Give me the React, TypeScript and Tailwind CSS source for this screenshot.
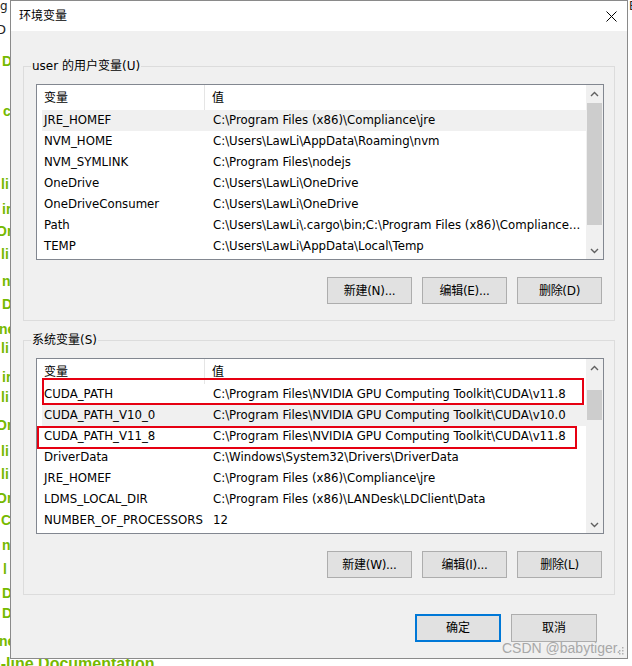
import React from "react";

type Row = { name: string; value: string; selected?: boolean };

const userRows: Row[] = [
  { name: "JRE_HOMEF", value: "C:\\Program Files (x86)\\Compliance\\jre", selected: true },
  { name: "NVM_HOME", value: "C:\\Users\\LawLi\\AppData\\Roaming\\nvm" },
  { name: "NVM_SYMLINK", value: "C:\\Program Files\\nodejs" },
  { name: "OneDrive", value: "C:\\Users\\LawLi\\OneDrive" },
  { name: "OneDriveConsumer", value: "C:\\Users\\LawLi\\OneDrive" },
  { name: "Path", value: "C:\\Users\\LawLi\\.cargo\\bin;C:\\Program Files (x86)\\Compliance..." },
  { name: "TEMP", value: "C:\\Users\\LawLi\\AppData\\Local\\Temp" },
];

const sysRows: Row[] = [
  { name: "CUDA_PATH", value: "C:\\Program Files\\NVIDIA GPU Computing Toolkit\\CUDA\\v11.8" },
  { name: "CUDA_PATH_V10_0", value: "C:\\Program Files\\NVIDIA GPU Computing Toolkit\\CUDA\\v10.0", selected: true },
  { name: "CUDA_PATH_V11_8", value: "C:\\Program Files\\NVIDIA GPU Computing Toolkit\\CUDA\\v11.8" },
  { name: "DriverData", value: "C:\\Windows\\System32\\Drivers\\DriverData" },
  { name: "JRE_HOMEF", value: "C:\\Program Files (x86)\\Compliance\\jre" },
  { name: "LDMS_LOCAL_DIR", value: "C:\\Program Files (x86)\\LANDesk\\LDClient\\Data" },
  { name: "NUMBER_OF_PROCESSORS", value: "12" },
];

function Chevron({ up }: { up?: boolean }) {
  return (
    <svg width="9" height="6" viewBox="0 0 9 6">
      {up ? (
        <path d="M1 5 L4.5 1.5 L8 5" fill="none" stroke="#606060" strokeWidth="1.4" />
      ) : (
        <path d="M1 1 L4.5 4.5 L8 1" fill="none" stroke="#606060" strokeWidth="1.4" />
      )}
    </svg>
  );
}

function ListView({
  rows,
  thumbTop,
  thumbHeight,
  children,
}: {
  rows: Row[];
  thumbTop: string;
  thumbHeight: string;
  children?: React.ReactNode;
}) {
  return (
    <div className="relative h-[176px] border border-[#828790] bg-white flex">
      <div className="flex-1 flex flex-col">
        <div className="h-[25px] flex items-center shrink-0 text-[12px]">
          <div className="w-[168px] pl-[7px] h-full flex items-center border-r border-[#e5e5e5]">变量</div>
          <div className="pl-[7px]">值</div>
        </div>
        {rows.map((r, i) => (
          <div
            key={i}
            className={
              "ml-[5px] h-[21px] leading-[21px] flex whitespace-nowrap " +
              (r.selected ? "bg-[#f0f0f0]" : "")
            }
          >
            <div className="w-[169px] pl-[2px]">{r.name}</div>
            <div className="pl-[2px]">{r.value}</div>
          </div>
        ))}
      </div>
      <div className="w-[17px] bg-[#f0f0f0] flex flex-col">
        <div className="h-[17px] flex items-center justify-center">
          <Chevron up />
        </div>
        <div className={"mx-[1px] bg-[#cdcdcd] " + thumbTop + " " + thumbHeight} />
        <div className="flex-1" />
        <div className="h-[17px] flex items-center justify-center">
          <Chevron />
        </div>
      </div>
      {children}
    </div>
  );
}

function Btn({ label }: { label: string }) {
  return (
    <div className="w-[85px] h-[27px] flex items-center justify-center bg-[#e1e1e1] border border-[#adadad] text-[12px] tracking-[-0.3px]">
      {label}
    </div>
  );
}

function Group({
  title,
  rows,
  buttons,
  thumbTop,
  thumbHeight,
  overlay,
  className,
}: {
  title: string;
  rows: Row[];
  buttons: string[];
  thumbTop: string;
  thumbHeight: string;
  overlay?: React.ReactNode;
  className?: string;
}) {
  return (
    <fieldset className={"border border-[#dcdcdc] pl-[12px] pr-[10px] pb-[16px] " + (className || "")}>
      <legend className="ml-[-5px] px-[1px] leading-[16px] text-[12px]">{title}</legend>
      <div className="mt-[10px]">
        <ListView rows={rows} thumbTop={thumbTop} thumbHeight={thumbHeight}>
          {overlay}
        </ListView>
      </div>
      <div className="mt-[17px] flex justify-end gap-[10px] pr-[2px]">
        {buttons.map((b) => (
          <Btn key={b} label={b} />
        ))}
      </div>
    </fieldset>
  );
}

const green: [string, number, number][] = [
  ["D", 2, 53],
  ["c", 3, 103],
  ["li", 1, 176],
  ["ir", 2, 201],
  ["Or", -4, 223],
  ["li", 1, 246],
  ["n", 2, 273],
  ["D", 2, 296],
  ["ne", -1, 321],
  ["li", 1, 340],
  ["ir", 2, 369],
  ["li", 1, 389],
  ["Or", -4, 417],
  ["li", 1, 443],
  ["li", 1, 466],
  ["Or", -4, 490],
  ["C", 1, 512],
  ["n", 2, 537],
  ["l", 3, 561],
  ["D", 2, 585],
  ["D", 2, 605],
  ["ne", -1, 633],
];

export default function App() {
  return (
    <div className="relative w-[632px] h-[666px] overflow-hidden bg-white text-[11.75px] text-black [font-family:'DejaVu_Sans','Noto_Sans_CJK_SC',sans-serif]">
      {/* background page fragments */}
      <div className="absolute left-[0px] top-[-3px] text-[12px] text-[#222]">g</div>
      <div className="absolute left-[-4px] top-[20px] text-[13px] text-[#222]">D</div>
      {green.map(([t, x, y], i) => (
        <div
          key={i}
          className="absolute text-[14px] font-bold leading-[16px] text-[#76b900] [font-family:'Liberation_Sans',sans-serif]"
          style={{ left: x, top: y }}
        >
          {t}
        </div>
      ))}
      <div className="absolute left-[-9px] top-[654px] text-[16px] font-bold leading-[20px] text-[#76b900] whitespace-nowrap [font-family:'Liberation_Sans',sans-serif]">
        n-line Documentation
      </div>
      <div className="absolute left-[629px] top-[-3px] text-[12px] text-[#222]">E</div>

      {/* dialog window */}
      <div className="absolute left-[10px] top-0 w-[618px] h-[659px] border border-[#8a8a8a] bg-[#f0f0f0] flex flex-col">
        <div className="h-[30px] shrink-0 bg-white flex items-center justify-between pl-[8px] pr-[10px] text-[12px]">
          <span>环境变量</span>
          <svg width="11" height="11" viewBox="0 0 11 11">
            <path d="M0.5 0.5 L10.5 10.5 M10.5 0.5 L0.5 10.5" stroke="#000" strokeWidth="1" />
          </svg>
        </div>
        <div className="flex-1 flex flex-col px-[12px]">
          <Group
            className="mt-[27px]"
            title="user 的用户变量(U)"
            rows={userRows}
            buttons={["新建(N)...", "编辑(E)...", "删除(D)"]}
            thumbTop="mt-[1px]"
            thumbHeight="h-[122px]"
          />
          <Group
            className="mt-[11px]"
            title="系统变量(S)"
            rows={sysRows}
            buttons={["新建(W)...", "编辑(I)...", "删除(L)"]}
            thumbTop="mt-[14px]"
            thumbHeight="h-[30px]"
            overlay={
              <>
                <div className="absolute left-[5px] top-[19px] w-[542px] h-[27px] border-2 border-[#e60012]" />
                <div className="absolute left-[0px] top-[67px] w-[540px] h-[23px] border-2 border-[#e60012]" />
              </>
            }
          />
          <div className="mt-[19px] flex justify-end gap-[10px] pr-[18px] text-[12px]">
            <div className="w-[86px] h-[28px] flex items-center justify-center bg-[#e1e1e1] border-2 border-[#0078d7]">
              确定
            </div>
            <div className="w-[86px] h-[28px] flex items-center justify-center bg-[#e1e1e1] border border-[#adadad]">
              取消
            </div>
          </div>
        </div>
      </div>

      {/* watermark */}
      <div className="absolute left-[502px] top-[640px] text-[14px] leading-[16px] text-[#a8a8a8] [font-family:'Liberation_Sans',sans-serif] whitespace-nowrap">
        CSDN @babytiger.
      </div>
      <svg className="absolute left-[619px] top-[646px]" width="6" height="9" viewBox="0 0 6 9">
        <rect x="3" y="1" width="1.5" height="1.5" fill="#b0b0b0" />
        <rect x="3" y="4" width="1.5" height="1.5" fill="#b0b0b0" />
        <rect x="0" y="4" width="1.5" height="1.5" fill="#b0b0b0" />
        <rect x="3" y="7" width="1.5" height="1.5" fill="#b0b0b0" />
        <rect x="0" y="7" width="1.5" height="1.5" fill="#b0b0b0" />
      </svg>
    </div>
  );
}
